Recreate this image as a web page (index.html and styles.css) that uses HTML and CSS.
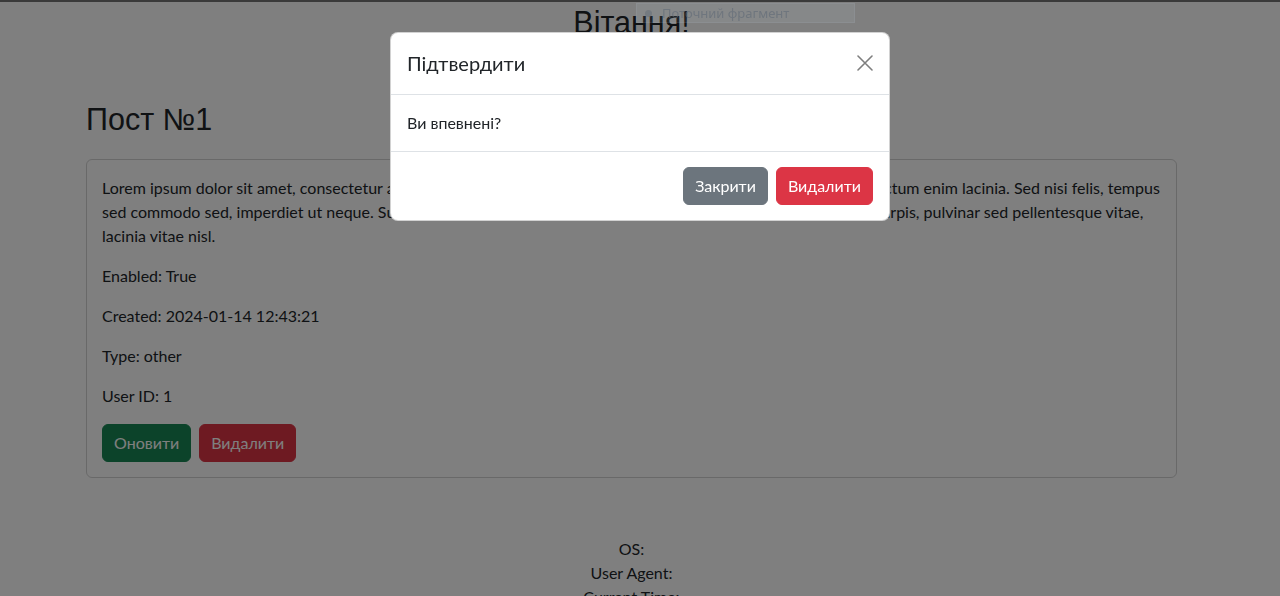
FILE: index.html
```html
<!DOCTYPE html>
<html lang="uk">
<head>
<meta charset="utf-8">
<title>Пост №1</title>
<link rel="stylesheet" href="styles.css">
</head>
<body>
<div class="page">
  <h1 class="greeting">Вітання!</h1>
  <h2 class="post-title">Пост №1</h2>
  <div class="card">
    <p>Lorem ipsum dolor sit amet, consectetur adipiscing elit. Integer nec odio. Praesent libero. Sed cursus ante duis dictum enim lacinia. Sed nisi felis, tempus sed commodo sed, imperdiet ut neque. Suspendisse potenti. Nunc feugiat tellus consequat imperdiet. Donec a turpis, pulvinar sed pellentesque vitae, lacinia vitae nisl.</p>
    <p>Enabled: True</p>
    <p>Created: 2024-01-14 12:43:21</p>
    <p>Type: other</p>
    <p>User ID: 1</p>
    <div class="actions">
      <button class="btn btn-success">Оновити</button>
      <button class="btn btn-danger">Видалити</button>
    </div>
  </div>
  <div class="sysinfo">
    <div>OS:</div>
    <div>User Agent:</div>
    <div>Current Time:</div>
  </div>
</div>

<div class="backdrop"></div>
<div class="topline"></div>
<div class="fragment-tip"><span class="tip-dot"></span>Поточний фрагмент</div>

<div class="modal">
  <div class="modal-content">
    <div class="modal-header">
      <h5 class="modal-title">Підтвердити</h5>
      <button class="btn-close" aria-label="Close">
        <svg viewBox="0 0 16 16" width="16" height="16"><path d="M1 1 L15 15 M15 1 L1 15" stroke="currentColor" stroke-width="1.6" fill="none" stroke-linecap="round"/></svg>
      </button>
    </div>
    <div class="modal-body">Ви впевнені?</div>
    <div class="modal-footer">
      <button class="btn btn-secondary">Закрити</button>
      <button class="btn btn-danger">Видалити</button>
    </div>
  </div>
</div>
</body>
</html>
```
FILE: styles.css
```css
* { box-sizing: border-box; }
html, body { margin: 0; height: 100%; }
body {
  font-family: "Lato", "Noto Sans", sans-serif;
  font-size: 16px;
  line-height: 24px;
  color: #212529;
  background: #fff;
  padding-right: 17px;
  overflow: hidden;
}
.page { padding: 4px 86px 0 86px; }
.greeting {
  font-family: "Liberation Sans", Arial, sans-serif;
  font-weight: 400;
  font-size: 30.5px;
  line-height: 37px;
  margin: 0;
  text-align: center;
}
.post-title {
  font-family: "Liberation Sans", Arial, sans-serif;
  font-weight: 400;
  font-size: 30.5px;
  line-height: 38px;
  margin: 59px 0 21px;
}
.card {
  border: 1px solid rgba(0,0,0,.175);
  border-radius: 6px;
  padding: 16px 16px 15px 15px;
}
.card p { margin: 0 0 16px; }
.actions { display: flex; gap: 8px; }
.btn {
  font-family: inherit;
  font-size: 16px;
  line-height: 24px;
  padding: 6px 12px;
  border: 1px solid transparent;
  border-radius: 6px;
  color: #fff;
  cursor: pointer;
}
.btn-success { background: #198754; border-color: #198754; }
.btn-danger { background: #dc3545; border-color: #dc3545; }
.btn-secondary { background: #6c757d; border-color: #6c757d; }
.actions .btn { padding: 6px 11px; }
.modal-footer .btn { padding: 6px 11px; }
.sysinfo { margin-top: 59px; text-align: center; }

.backdrop {
  position: fixed; inset: 0;
  background: rgba(0,0,0,.5);
}
.topline {
  position: fixed; left: 0; right: 0; top: 0;
  height: 2px; background: #3a3a3a;
}
.fragment-tip {
  position: fixed; left: 636px; top: 3px;
  width: 219px; height: 20px;
  background: rgba(200,218,236,.09);
  border: 1px solid rgba(200,218,236,.08);
  color: rgba(95,105,118,.6);
  font-family: "Noto Sans", sans-serif;
  font-size: 13px; line-height: 18px;
  padding-left: 25px;
}
.tip-dot {
  position: absolute; left: 8px; top: 6px;
  width: 7px; height: 7px; border-radius: 50%;
  background: rgba(95,105,118,.45);
}
.modal {
  position: fixed; inset: 0;
  display: flex; justify-content: center; align-items: flex-start;
  padding-top: 32px;
}
.modal-content {
  width: 500px;
  background: #fff;
  border: 1px solid rgba(0,0,0,.175);
  border-radius: 8px;
}
.modal-header {
  display: flex; align-items: center;
  padding: 15px 16px 16px;
  border-bottom: 1px solid #dee2e6;
}
.modal-title {
  margin: 0;
  font-size: 20px; line-height: 30px; font-weight: 400;
}
.btn-close {
  margin: -4px -4px -4px auto;
  width: 24px; height: 24px; padding: 4px;
  border: 0; background: transparent;
  color: #000; opacity: .5;
  display: flex;
}
.modal-body { padding: 16px; }
.modal-footer {
  display: flex; justify-content: flex-end; gap: 8px;
  padding: 11px 16px 11px;
  border-top: 1px solid #dee2e6;
}
.modal-footer .btn { margin: 4px 0; }
```
